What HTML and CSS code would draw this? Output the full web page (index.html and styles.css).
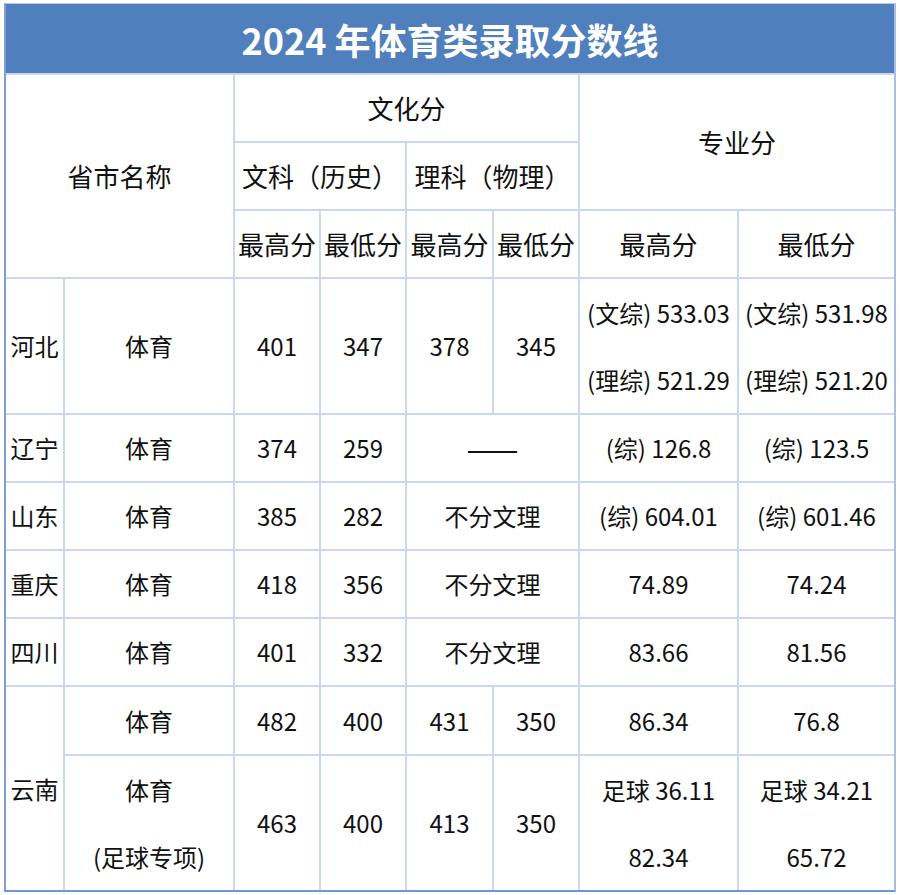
FILE: index.html
```html
<!DOCTYPE html>
<html lang="zh-CN">
<head>
<meta charset="utf-8">
<title>2024 年体育类录取分数线</title>
<link rel="stylesheet" href="styles.css">
</head>
<body>
<div class="frame">
<table class="score">
<colgroup>
<col class="c-prov"><col class="c-type"><col class="c-num"><col class="c-num"><col class="c-num2"><col class="c-num"><col class="c-pro1"><col class="c-pro2">
</colgroup>
<thead>
<tr class="title"><th colspan="8">2024 年体育类录取分数线</th></tr>
<tr class="h"><th colspan="2" rowspan="3">省市名称</th><th colspan="4">文化分</th><th colspan="2" rowspan="2">专业分</th></tr>
<tr class="h"><th colspan="2">文科（历史）</th><th colspan="2">理科（物理）</th></tr>
<tr class="h"><th>最高分</th><th>最低分</th><th>最高分</th><th>最低分</th><th>最高分</th><th>最低分</th></tr>
</thead>
<tbody>
<tr class="r2"><td>河北</td><td>体育</td><td>401</td><td>347</td><td>378</td><td>345</td><td class="two">(文综) 533.03<br>(理综) 521.29</td><td class="two">(文综) 531.98<br>(理综) 521.20</td></tr>
<tr><td>辽宁</td><td>体育</td><td>374</td><td>259</td><td colspan="2" class="dash">——</td><td>(综) 126.8</td><td>(综) 123.5</td></tr>
<tr><td>山东</td><td>体育</td><td>385</td><td>282</td><td colspan="2">不分文理</td><td>(综) 604.01</td><td>(综) 601.46</td></tr>
<tr><td>重庆</td><td>体育</td><td>418</td><td>356</td><td colspan="2">不分文理</td><td>74.89</td><td>74.24</td></tr>
<tr><td>四川</td><td>体育</td><td>401</td><td>332</td><td colspan="2">不分文理</td><td>83.66</td><td>81.56</td></tr>
<tr class="r1y"><td rowspan="2">云南</td><td>体育</td><td>482</td><td>400</td><td>431</td><td>350</td><td>86.34</td><td>76.8</td></tr>
<tr class="r2b"><td class="two">体育<br>(足球专项)</td><td>463</td><td>400</td><td>413</td><td>350</td><td class="two">足球 36.11<br>82.34</td><td class="two">足球 34.21<br>65.72</td></tr>
</tbody>
</table>
</div>
</body>
</html>
```
FILE: styles.css
```css
html, body {
  margin: 0;
  padding: 0;
  background: #ffffff;
}

body {
  font-family: "Noto Sans CJK SC", "Noto Sans", sans-serif;
  color: #111111;
}

.frame {
  margin: 3px 0 0 4px;
  width: 888px;
  border-top: 1px solid #b7c9e4;
  border-left: 2px solid #7f9fd3;
  border-right: 2px solid #a8bfe2;
  border-bottom: 2px solid #7098d0;
}

.score {
  width: 888px;
  border-collapse: collapse;
  border-style: hidden;
  table-layout: fixed;
}

.c-prov { width: 58px; }
.c-type { width: 170px; }
.c-num { width: 86px; }
.c-num2 { width: 87px; }
.c-pro1 { width: 159px; }
.c-pro2 { width: 156px; }

.score th,
.score td {
  border: 2px solid #cad8ee;
  padding: 0;
  text-align: center;
  vertical-align: middle;
  white-space: nowrap;
  font-weight: normal;
}

.score td {
  font-size: 24px;
  height: 66px;
  line-height: 30px;
}

.score .title th {
  background: #4f80bd;
  color: #ffffff;
  font-size: 36px;
  font-weight: bold;
  height: 69px;
  line-height: 40px;
}

.score .h th {
  font-size: 26px;
  height: 66px;
  line-height: 30px;
}

.score .r2 td {
  height: 134px;
}

.score .r1y td {
  height: 67px;
}

.score .r2b td {
  height: 133px;
}

.score td.two {
  line-height: 67px;
}

.score td.dash {
  font-size: 31px;
  line-height: 30px;
}
```
